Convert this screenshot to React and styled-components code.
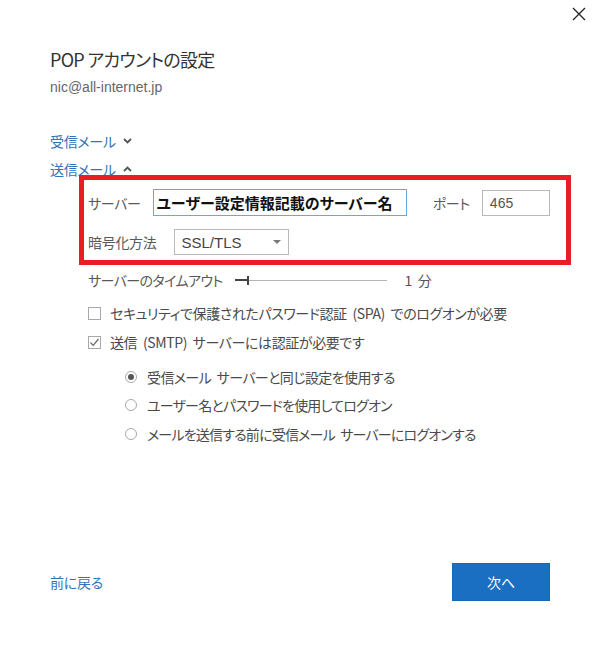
import React from "react";
import styled, { createGlobalStyle } from "styled-components";

const GlobalStyle = createGlobalStyle`
  html, body {
    margin: 0;
    padding: 0;
    background: #ffffff;
  }
  body {
    font-family: "Noto Sans CJK JP", "Noto Sans", sans-serif;
    font-feature-settings: "palt";
  }
`;

const Dialog = styled.div`
  width: 600px;
  height: 647px;
  box-sizing: border-box;
  padding: 0 50px 46px 50px;
  display: flex;
  flex-direction: column;
  background: #fff;
  color: #4a4a4a;
`;

const TopBar = styled.div`
  height: 28px;
  margin-right: -36px;
  display: flex;
  justify-content: flex-end;
  align-items: center;
`;

const CloseButton = styled.button`
  border: none;
  background: none;
  padding: 0;
  width: 14px;
  height: 14px;
  display: flex;
  cursor: pointer;
`;

const Title = styled.h1`
  margin: 19px 0 0;
  font-size: 18px;
  font-weight: 400;
  line-height: 24px;
  letter-spacing: -0.7px;
  color: #333;
`;

const Account = styled.div`
  margin-top: 6px;
  font-family: "Liberation Sans", "Noto Sans CJK JP", sans-serif;
  font-size: 14px;
  line-height: 20px;
  color: #666;
`;

const Disclosure = styled.a`
  display: flex;
  align-items: center;
  gap: 7px;
  height: 18px;
  margin-top: ${(p) => p.$top}px;
  font-size: 14px;
  letter-spacing: -0.3px;
  color: #3473b8;
  text-decoration: none;
  cursor: pointer;
`;

const Highlight = styled.div`
  box-sizing: border-box;
  width: 492px;
  margin: -3px 0 0 29px;
  border: 5px solid #e81d25;
  padding: 9px 0 5px 4px;
  display: flex;
  flex-direction: column;
  gap: 13px;
`;

const FieldRow = styled.div`
  display: flex;
  align-items: center;
`;

const Label = styled.span`
  flex-shrink: 0;
  white-space: nowrap;
  font-size: 14px;
  letter-spacing: -0.3px;
  color: #595959;
  margin-left: ${(p) => p.$before || 0}px;
  margin-right: ${(p) => p.$gap}px;
`;

const TextInput = styled.div`
  box-sizing: border-box;
  flex-shrink: 0;
  width: ${(p) => p.$w}px;
  height: ${(p) => p.$h}px;
  border: 1px solid ${(p) => (p.$focus ? "#6ea6dc" : "#b9b9b9")};
  padding-left: ${(p) => (p.$focus ? 3 : 7)}px;
  display: flex;
  align-items: center;
  font-size: ${(p) => (p.$focus ? 15 : 14)}px;
  font-weight: ${(p) => (p.$focus ? 700 : 400)};
  color: ${(p) => (p.$focus ? "#111" : "#555")};
  font-family: ${(p) =>
    p.$focus ? '"Noto Sans CJK JP", sans-serif' : '"Liberation Sans", sans-serif'};
  white-space: nowrap;
  overflow: hidden;
`;

const Select = styled.div`
  box-sizing: border-box;
  width: 115px;
  height: 26px;
  border: 1px solid #b9b9b9;
  padding: 0 7px 0 7px;
  display: flex;
  align-items: center;
  justify-content: space-between;
  font-family: "Liberation Sans", sans-serif;
  font-size: 15px;
  color: #444;
`;

const Caret = styled.span`
  width: 0;
  height: 0;
  border-left: 4px solid transparent;
  border-right: 4px solid transparent;
  border-top: 4px solid #7a7a7a;
`;

const Options = styled.div`
  padding-left: 38px;
  display: flex;
  flex-direction: column;
`;

const TimeoutRow = styled.div`
  margin-top: 5px;
  height: 20px;
  display: flex;
  align-items: center;
  font-size: 14px;
  letter-spacing: -0.6px;
  color: #595959;
  white-space: nowrap;
`;

const Slider = styled.div`
  width: 152px;
  height: 9px;
  margin: 0 18px 0 12px;
  display: flex;
  align-items: center;
`;

const Track = styled.div`
  flex: 1;
  height: 1px;
  background: #b5b5b5;
`;

const TrackFill = styled.div`
  width: 12px;
  height: 2px;
  background: #444;
`;

const Thumb = styled.div`
  width: 2px;
  height: 9px;
  background: #444;
`;

const Minutes = styled.span`
  display: flex;
  gap: 6px;
  color: #555;
`;

const CheckRow = styled.label`
  display: flex;
  align-items: center;
  height: 20px;
  margin-top: ${(p) => p.$top}px;
  margin-left: ${(p) => p.$indent || 0}px;
  gap: ${(p) => p.$gap}px;
  font-size: 14px;
  letter-spacing: ${(p) => p.$tight || -0.4}px;
  word-spacing: 3px;
  color: #4a4a4a;
  white-space: pre;
`;

const Box = styled.span`
  box-sizing: border-box;
  width: 13px;
  height: 13px;
  border: 1px solid #a8a8a8;
  display: flex;
  align-items: center;
  justify-content: center;
  flex-shrink: 0;
`;

const Radio = styled.span`
  box-sizing: border-box;
  width: 12px;
  height: 12px;
  border: 1px solid #a8a8a8;
  border-radius: 50%;
  display: flex;
  align-items: center;
  justify-content: center;
  flex-shrink: 0;
`;

const Dot = styled.span`
  width: 6px;
  height: 6px;
  border-radius: 50%;
  background: #555;
`;

const Footer = styled.div`
  margin-top: auto;
  display: flex;
  align-items: center;
  justify-content: space-between;
`;

const BackLink = styled.a`
  font-size: 14px;
  letter-spacing: -0.3px;
  color: #3473b8;
  cursor: pointer;
`;

const NextButton = styled.button`
  width: 98px;
  height: 38px;
  border: 1px solid #1767b5;
  background: #1a6fc2;
  color: #fff;
  font-family: "Noto Sans CJK JP", sans-serif;
  font-feature-settings: "palt";
  font-size: 14px;
  cursor: pointer;
`;

function Chevron({ up }) {
  return (
    <svg width="9" height="6" viewBox="0 0 9 6">
      <path
        d={up ? "M1 5 L4.5 1.5 L8 5" : "M1 1 L4.5 4.5 L8 1"}
        fill="none"
        stroke="#555"
        strokeWidth="1.8"
      />
    </svg>
  );
}

function App() {
  return (
    <>
      <GlobalStyle />
      <Dialog>
        <TopBar>
          <CloseButton aria-label="閉じる">
            <svg width="14" height="14" viewBox="0 0 14 14">
              <path d="M1 1 L13 13 M13 1 L1 13" stroke="#222" strokeWidth="1.3" />
            </svg>
          </CloseButton>
        </TopBar>

        <Title>POP アカウントの設定</Title>
        <Account>nic@all-internet.jp</Account>

        <Disclosure $top={35}>
          受信メール <Chevron />
        </Disclosure>
        <Disclosure $top={10}>
          送信メール <Chevron up />
        </Disclosure>

        <Highlight>
          <FieldRow>
            <Label $gap={12}>サーバー</Label>
            <TextInput $w={254} $h={27} $focus>
              ユーザー設定情報記載のサーバー名
            </TextInput>
            <Label $before={26} $gap={12}>
              ポート
            </Label>
            <TextInput $w={68} $h={26}>
              465
            </TextInput>
          </FieldRow>
          <FieldRow>
            <Label $gap={17}>暗号化方法</Label>
            <Select>
              SSL/TLS
              <Caret />
            </Select>
          </FieldRow>
        </Highlight>

        <Options>
          <TimeoutRow>
            サーバーのタイムアウト
            <Slider>
              <TrackFill />
              <Thumb />
              <Track />
            </Slider>
            <Minutes>
              <span>1</span>
              <span>分</span>
            </Minutes>
          </TimeoutRow>

          <CheckRow $top={13} $gap={9}>
            <Box />
            セキュリティで保護されたパスワード認証 (SPA) でのログオンが必要
          </CheckRow>
          <CheckRow $top={9} $gap={9}>
            <Box>
              <svg width="11" height="11" viewBox="0 0 11 11">
                <path d="M1.5 5.5 L4.2 8.3 L9.5 2" fill="none" stroke="#666" strokeWidth="1.2" />
              </svg>
            </Box>
            送信 (SMTP) サーバーには認証が必要です
          </CheckRow>

          <CheckRow $top={15} $indent={37} $gap={10} $tight={-0.6}>
            <Radio>
              <Dot />
            </Radio>
            受信メール サーバーと同じ設定を使用する
          </CheckRow>
          <CheckRow $top={8} $indent={37} $gap={10} $tight={-0.8}>
            <Radio />
            ユーザー名とパスワードを使用してログオン
          </CheckRow>
          <CheckRow $top={9} $indent={37} $gap={10} $tight={-0.8}>
            <Radio />
            メールを送信する前に受信メール サーバーにログオンする
          </CheckRow>
        </Options>

        <Footer>
          <BackLink>前に戻る</BackLink>
          <NextButton>次へ</NextButton>
        </Footer>
      </Dialog>
    </>
  );
}

export default App;
